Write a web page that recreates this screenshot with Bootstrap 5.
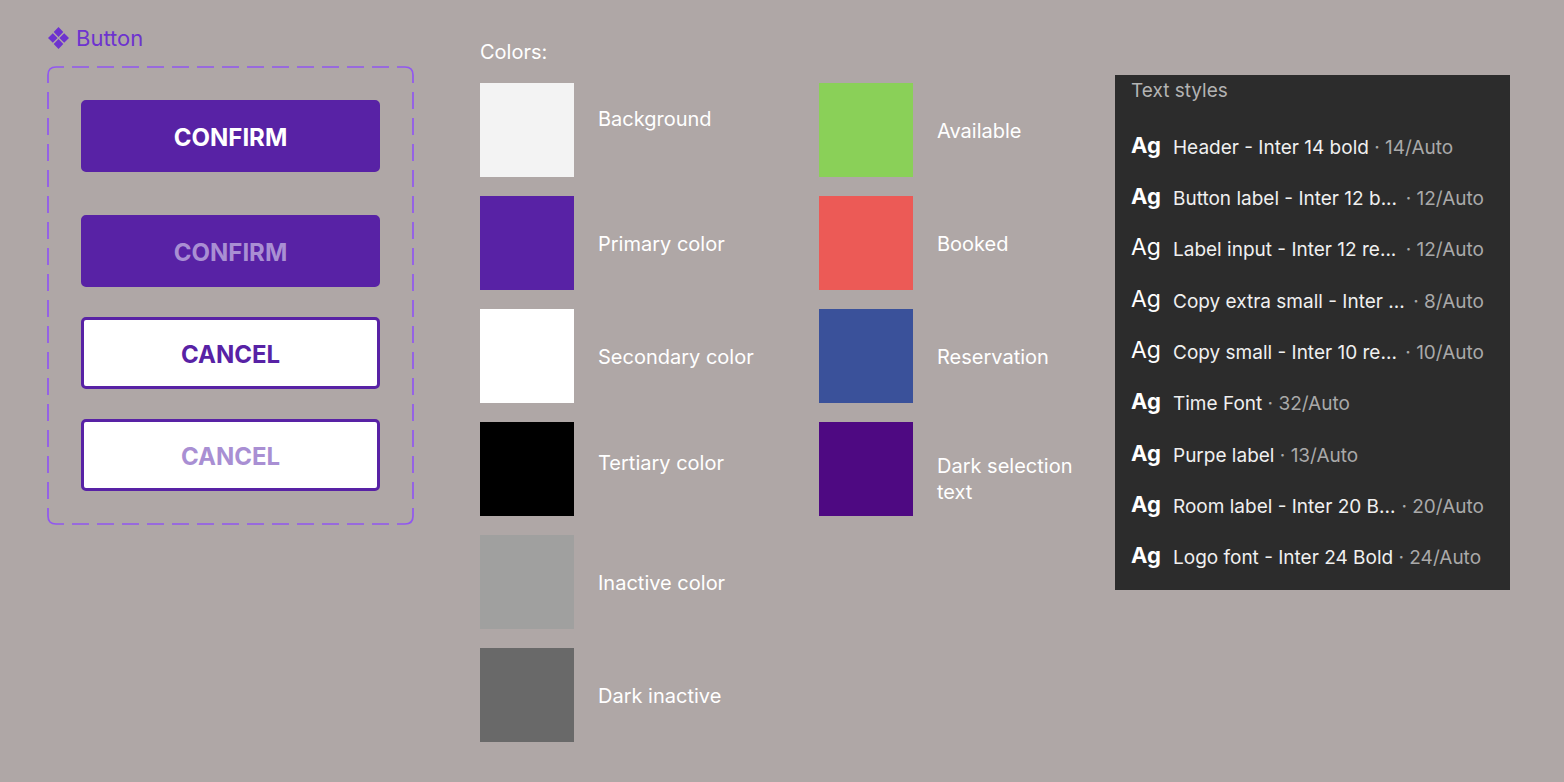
<!DOCTYPE html>
<html lang="en">
<head>
<meta charset="utf-8">
<meta name="viewport" content="width=device-width, initial-scale=1">
<title>Style guide</title>
<link href="https://cdn.jsdelivr.net/npm/bootstrap@5.3.0/dist/css/bootstrap.min.css" rel="stylesheet">
<style>
  :root { --brand: #5822a5; --brand-muted: #a98fd3; --outline: #9157f0; }
  body { background: #afa7a6; color: #fff; font-family: Inter, "Liberation Sans", sans-serif; font-size: 20px; line-height: 26px; }
  .guide { display: grid; grid-template-columns: 433fr 635fr 395fr; align-items: start; padding: 25px 54px 40px 47px; }
  .component-col { padding-right: 66px; }
  .component-title { color: #6d33cf; font-size: 22px; line-height: 26px; font-weight: 400; gap: 6px; margin-bottom: 15px; }
  .variants { padding: 34px; }
  .variants svg { color: var(--outline); }
  .btn-guide { height: 72px; padding: 10px 12px 6px; border: 3px solid var(--brand); border-radius: 5px; font-size: 24px; font-weight: 700; line-height: 30px; }
  .btn-guide:disabled { opacity: 1; border-color: var(--brand); }
  .btn-confirm, .btn-confirm:hover, .btn-confirm:disabled { background: var(--brand); color: #fff; }
  .btn-cancel, .btn-cancel:hover, .btn-cancel:disabled { background: #fff; color: var(--brand); }
  .btn-confirm:disabled, .btn-cancel:disabled { color: var(--brand-muted); }
  .after-confirm { margin-top: 43px; }
  .after-group { margin-top: 30px; }
  .colors-title { font-size: 20px; line-height: 26px; font-weight: 400; margin: 14px 0 18px; }
  .palette { display: grid; grid-template-columns: 339fr 296fr; align-items: start; }
  .palette ul { display: grid; gap: 19px; }
  .swatch { width: 94px; height: 94px; flex: none; }
  .palette li { display: flex; align-items: center; gap: 24px; }
  .swatch-label { padding-top: 2px; }
  .label-high { padding-bottom: 24px; }
  .label-mid { padding-bottom: 14px; }
  .label-low { padding-top: 20px; }
  .styles-panel { background: #2c2c2c; margin-top: 50px; padding: 3px 26px 6px 16px; font-size: 19px; }
  .styles-panel h2 { font-size: 19px; line-height: 26px; font-weight: 400; color: #b3b3b3; margin: 0 0 18px; }
  .styles-panel ul { display: grid; grid-auto-rows: 1fr; min-height: 462px; color: #f0f0f0; }
  .styles-panel li { display: flex; align-items: center; white-space: pre; }
  .sample { width: 42px; flex: none; font-size: 23px; padding-bottom: 6px; color: #fff; }
  .sample-bold { font-size: 22px; font-weight: 700; }
  .spec { color: #a9a9a9; }
  @media (max-width: 1300px) { .guide { grid-template-columns: 1fr; gap: 32px; } .styles-panel { margin-top: 0; } }
</style>
</head>
<body>
<main class="guide">
  <section class="component-col">
    <h1 class="component-title d-flex align-items-center">
      <svg width="23" height="22" viewBox="0 0 23 22" fill="currentColor" aria-hidden="true"><path d="M11.500 0l4.800 5-4.800 5-4.800-5zM11.500 12l4.800 5-4.800 5-4.800-5zM5.800 6.200l4.800 4.800-4.800 4.800L1 11zM17.200 6.200L22 11l-4.800 4.800-4.800-4.800z"/></svg>
      Button
    </h1>
    <div class="variants position-relative d-flex flex-column">
      <svg class="position-absolute top-0 start-0 w-100 h-100 pe-none" viewBox="0 0 367 459" preserveAspectRatio="none" fill="none" stroke="currentColor" stroke-width="1.700" aria-hidden="true">
        <path d="M1 17V9Q1 1 9 1H17M350 1H358Q366 1 366 9V17M366 442V450Q366 458 358 458H350M17 458H9Q1 458 1 450V442"/>
        <path d="M25 1H345M25 458H345" stroke-dasharray="17 8"/>
        <path d="M1 26V438M366 26V438" stroke-dasharray="17 9"/>
      </svg>
      <button type="button" class="btn btn-guide btn-confirm">CONFIRM</button>
      <button type="button" class="btn btn-guide btn-confirm after-confirm" disabled>CONFIRM</button>
      <button type="button" class="btn btn-guide btn-cancel after-group">CANCEL</button>
      <button type="button" class="btn btn-guide btn-cancel after-group" disabled>CANCEL</button>
    </div>
  </section>

  <section>
    <h2 class="colors-title">Colors:</h2>
    <div class="palette">
      <ul class="list-unstyled mb-0">
        <li><span class="swatch" style="background:#f3f3f3"></span><span class="swatch-label label-high">Background</span></li>
        <li><span class="swatch" style="background:#5822a5"></span><span class="swatch-label">Primary color</span></li>
        <li><span class="swatch" style="background:#ffffff"></span><span class="swatch-label">Secondary color</span></li>
        <li><span class="swatch" style="background:#000000"></span><span class="swatch-label label-mid">Tertiary color</span></li>
        <li><span class="swatch" style="background:#a0a09f"></span><span class="swatch-label">Inactive color</span></li>
        <li><span class="swatch" style="background:#696969"></span><span class="swatch-label">Dark inactive</span></li>
      </ul>
      <ul class="list-unstyled mb-0">
        <li><span class="swatch" style="background:#8ad058"></span><span class="swatch-label">Available</span></li>
        <li><span class="swatch" style="background:#ec5a56"></span><span class="swatch-label">Booked</span></li>
        <li><span class="swatch" style="background:#3a519a"></span><span class="swatch-label">Reservation</span></li>
        <li><span class="swatch" style="background:#4e0982"></span><span class="swatch-label label-low">Dark selection<br>text</span></li>
      </ul>
    </div>
  </section>

  <section class="styles-panel">
    <h2>Text styles</h2>
    <ul class="list-unstyled mb-0">
      <li><span class="sample sample-bold">Ag</span><span>Header - Inter 14 bold</span><span class="spec"> · 14/Auto</span></li>
      <li><span class="sample sample-bold">Ag</span><span>Button label - Inter 12 b...</span><span class="spec ms-auto">· 12/Auto</span></li>
      <li><span class="sample">Ag</span><span>Label input - Inter 12 re...</span><span class="spec ms-auto">· 12/Auto</span></li>
      <li><span class="sample">Ag</span><span>Copy extra small - Inter ...</span><span class="spec ms-auto">· 8/Auto</span></li>
      <li><span class="sample">Ag</span><span>Copy small - Inter 10 re...</span><span class="spec ms-auto">· 10/Auto</span></li>
      <li><span class="sample sample-bold">Ag</span><span>Time Font</span><span class="spec"> · 32/Auto</span></li>
      <li><span class="sample sample-bold">Ag</span><span>Purpe label</span><span class="spec"> · 13/Auto</span></li>
      <li><span class="sample sample-bold">Ag</span><span>Room label - Inter 20 B...</span><span class="spec ms-auto">· 20/Auto</span></li>
      <li><span class="sample sample-bold">Ag</span><span>Logo font - Inter 24 Bold</span><span class="spec"> · 24/Auto</span></li>
    </ul>
  </section>
</main>
<script src="https://cdn.jsdelivr.net/npm/bootstrap@5.3.0/dist/js/bootstrap.bundle.min.js"></script>
</body>
</html>
